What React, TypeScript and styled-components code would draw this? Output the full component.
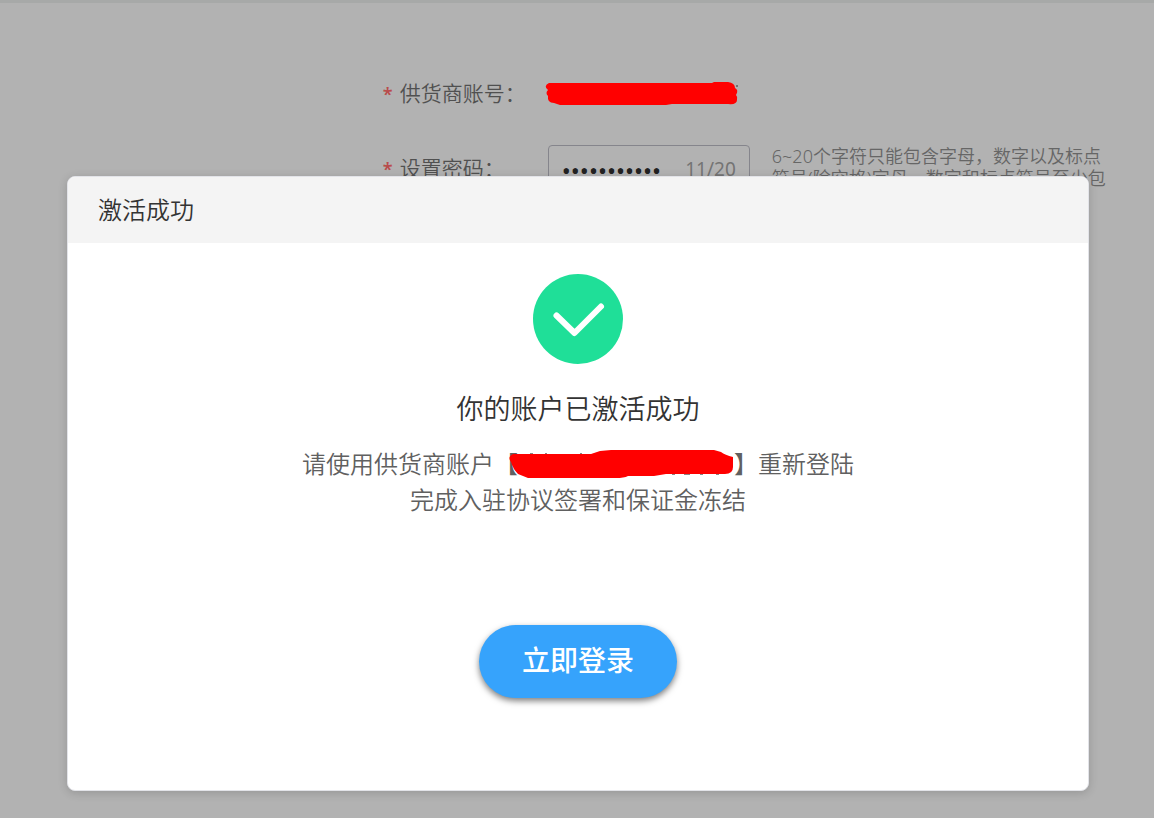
import React, { useState } from "react";
import styled, { createGlobalStyle } from "styled-components";

const GlobalStyle = createGlobalStyle`
  *, *::before, *::after { box-sizing: border-box; }
  body {
    margin: 0;
    background: #b2b2b2;
    font-family: "Noto Sans CJK SC", "Noto Sans", sans-serif;
    font-weight: 350;
  }
  h1, h2, p { margin: 0; font-weight: 350; }
`;

const Page = styled.div`
  position: relative;
  min-height: 100vh;
  border-top: 3px solid #a7a9a8;
`;

const Form = styled.form`
  display: flex;
  flex-direction: column;
  gap: 27px;
  padding: 67px 40px 0 33%;
`;

const Row = styled.div`
  display: grid;
  grid-template-columns: 167px 202px 1fr;
  align-items: start;
  min-height: 48px;
`;

const Label = styled.label`
  color: #505050;
  font-size: 21px;
  line-height: 44px;
  white-space: nowrap;

  &::before {
    content: "*";
    display: inline-block;
    width: 19px;
    padding-left: 2px;
    color: #b94c4c;
    font-family: "Noto Sans", sans-serif;
    font-size: 18px;
    font-weight: 600;
    line-height: 1;
  }
`;

const Account = styled.output`
  display: flex;
  align-items: center;
  height: 48px;
`;

const Field = styled.div`
  display: flex;
  align-items: center;
  height: 48px;
  padding: 0 13px;
  border: 1px solid #85858c;
  border-radius: 4px;
`;

const Password = styled.input`
  flex: 1;
  min-width: 0;
  padding: 2px 0 0;
  border: 0;
  outline: 0;
  background: transparent;
  color: #222;
  font-family: "Noto Sans", sans-serif;
  font-size: 24px;
`;

const Count = styled.span`
  color: #747474;
  font-family: "Noto Sans", sans-serif;
  font-size: 19px;
  font-weight: 400;
  line-height: 24px;
`;

const Hint = styled.p`
  padding-left: 22px;
  color: #666;
  font-family: "Noto Sans", "Noto Sans CJK SC", sans-serif;
  font-size: 18px;
  line-height: 22px;
`;

const Overlay = styled.div`
  position: absolute;
  inset: 0;
  padding: 173px 65px 0 67px;
`;

const Dialog = styled.section`
  overflow: hidden;
  border: 1px solid #e2e3e8;
  border-radius: 8px;
  background: #fff;
  box-shadow: 0 2px 10px rgba(0, 0, 0, 0.16);
`;

const DialogHeader = styled.header`
  padding: 0 30px 2px;
  background: #f4f4f4;
`;

const DialogTitle = styled.h1`
  color: #333;
  font-size: 24px;
  line-height: 64px;
`;

const DialogBody = styled.div`
  display: flex;
  flex-direction: column;
  align-items: center;
  padding: 31px 24px 92px;
  text-align: center;
`;

const Headline = styled.h2`
  margin-top: 26px;
  color: #333;
  font-size: 27px;
  line-height: 36px;
`;

const Message = styled.p`
  margin-top: 19px;
  color: #606060;
  font-size: 24px;
  line-height: 36px;
`;

const NameScribble = styled.svg`
  overflow: visible;
  vertical-align: middle;
`;

const LoginButton = styled.button`
  width: 198px;
  height: 73px;
  margin-top: 108px;
  padding: 0 0 6px;
  border: 0;
  border-radius: 37px;
  background: #36a3fc;
  box-shadow: 0 3px 6px rgba(0, 0, 0, 0.5);
  color: #fff;
  font-family: inherit;
  font-size: 28px;
  font-weight: 500;
  cursor: pointer;
`;

export default function App() {
  const [password, setPassword] = useState("abcdef12345");

  return (
    <Page>
      <GlobalStyle />
      <Form>
        <Row>
          <Label htmlFor="account">供货商账号：</Label>
          <Account id="account">
            <svg width="192" height="24" viewBox="0 0 192 24" overflow="visible" aria-hidden="true">
              <path
                d="M1 1Q-5 4 0 8Q-3 11 0 14Q-1 21 6 21L12 23L118 23L124 22L180 22Q189 23 189 18Q190 15 188 13Q191 8 187 6Q187 1 180 0L166 0L164 1Z"
                fill="#f00"
              />
              <path d="M188 4h2" stroke="#333" />
            </svg>
          </Account>
        </Row>
        <Row>
          <Label htmlFor="password">设置密码：</Label>
          <Field>
            <Password
              id="password"
              type="password"
              maxLength={20}
              value={password}
              onChange={(e) => setPassword(e.target.value)}
            />
            <Count>{password.length}/20</Count>
          </Field>
          <Hint>6~20个字符只能包含字母，数字以及标点符号(除空格)字母，数字和标点符号至少包</Hint>
        </Row>
      </Form>

      <Overlay>
        <Dialog role="dialog" aria-modal="true" aria-labelledby="dialog-title">
          <DialogHeader>
            <DialogTitle id="dialog-title">激活成功</DialogTitle>
          </DialogHeader>
          <DialogBody>
            <svg width="90" height="90" viewBox="0 0 90 90" aria-hidden="true">
              <circle cx="45" cy="45" r="45" fill="#1fdf98" />
              <path
                d="M23.500 41.500L41.500 59L68 32.500"
                fill="none"
                stroke="#fff"
                strokeWidth="6"
                strokeLinecap="round"
                strokeLinejoin="round"
              />
            </svg>
            <Headline>你的账户已激活成功</Headline>
            <Message>
              请使用供货商账户【
              <NameScribble width="216" height="28" viewBox="0 2 216 28" aria-hidden="true">
                <path d="M12 4h3M27 4h2M62 4h2M154 24h3M166 24h6M182 24h3M198 24h3" stroke="#888" strokeWidth="2" />
                <path
                  d="M-5 4Q-11 7 -7 12Q-5 19 0 24L10 28L98 28Q106 28 110 26L136 26L148 24L207 24Q215 24 215 17L215 7Q207 5 203 2L196 0L93 0L82 1L73 4Z"
                  fill="#f00"
                />
              </NameScribble>
              】重新登陆
              <br />
              完成入驻协议签署和保证金冻结
            </Message>
            <LoginButton type="button">立即登录</LoginButton>
          </DialogBody>
        </Dialog>
      </Overlay>
    </Page>
  );
}
